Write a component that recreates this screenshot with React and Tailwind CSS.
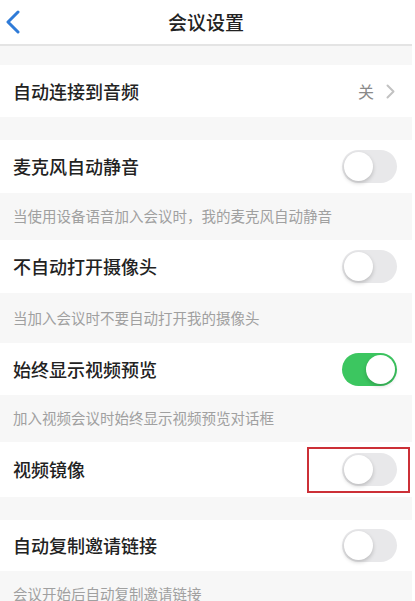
import React from "react";

const font = { fontFamily: '"Noto Sans CJK SC", "Noto Sans", sans-serif' };

function Toggle({ on }) {
  return (
    <div
      className={
        "relative w-[55px] h-[33px] rounded-full " +
        (on ? "bg-[#3cc660]" : "bg-[#e8e8ea]")
      }
    >
      <div
        className={
          "absolute top-[2px] w-[29px] h-[29px] rounded-full bg-white shadow-[0_2px_4px_rgba(0,0,0,0.2)] " +
          (on ? "left-[24px]" : "left-[2px]")
        }
      />
    </div>
  );
}

function Row({ label, on, h = "h-[53px]", children }) {
  return (
    <div className={"relative flex items-center justify-between bg-white pl-[13px] pr-[15px] " + h}>
      <span className="text-[18px] font-medium text-[#222]">{label}</span>
      <Toggle on={on} />
      {children}
    </div>
  );
}

function Desc({ text, h = "h-[47px]" }) {
  return (
    <div className={"flex items-center bg-[#f7f7f7] pl-[13px] " + h}>
      <span className="text-[14.5px] leading-none text-[#a0a0a0]">{text}</span>
    </div>
  );
}

export default function App() {
  return (
    <div className="w-[415px] h-[601px] overflow-hidden bg-white pr-[3px]" style={font}>
      <div className="bg-[#f7f7f7] h-full">
        <div className="relative flex items-center justify-center h-[46px] bg-white border-b-2 border-[#e4e4e4]">
          <svg
            className="absolute left-[5px] top-[10px]"
            width="16"
            height="24"
            viewBox="0 0 16 24"
            fill="none"
          >
            <path d="M13 2 L3 12 L13 22" stroke="#2f7bd8" strokeWidth="3" strokeLinecap="round" strokeLinejoin="round" />
          </svg>
          <span className="text-[19px] text-[#222] font-medium">会议设置</span>
        </div>
        <div className="h-[19px]" />
        <div className="flex items-center justify-between bg-white h-[52px] pl-[13px] pr-[17px]">
          <span className="text-[18px] font-medium text-[#222]">自动连接到音频</span>
          <div className="flex items-center gap-[12px]">
            <span className="text-[16px] text-[#8a8a8a]">关</span>
            <svg width="9" height="15" viewBox="0 0 9 15" fill="none">
              <path d="M1.5 1.5 L7.5 7.5 L1.5 13.5" stroke="#c2c2c2" strokeWidth="2" strokeLinecap="round" strokeLinejoin="round" />
            </svg>
          </div>
        </div>
        <div className="h-[23px]" />
        <Row label="麦克风自动静音" on={false} />
        <Desc text="当使用设备语音加入会议时，我的麦克风自动静音" />
        <Row label="不自动打开摄像头" on={false} />
        <Desc text="当加入会议时不要自动打开我的摄像头" h="h-[50px]" />
        <Row label="始终显示视频预览" on={true} h="h-[52px]" />
        <Desc text="加入视频会议时始终显示视频预览对话框" />
        <Row label="视频镜像" on={false} h="h-[55px]">
          <div className="absolute left-[307px] top-[5px] w-[103px] h-[46px] border-2 border-[#cc3037]" />
        </Row>
        <div className="h-[23px]" />
        <Row label="自动复制邀请链接" on={false} h="h-[51px]" />
        <Desc text="会议开始后自动复制邀请链接" />
      </div>
    </div>
  );
}
